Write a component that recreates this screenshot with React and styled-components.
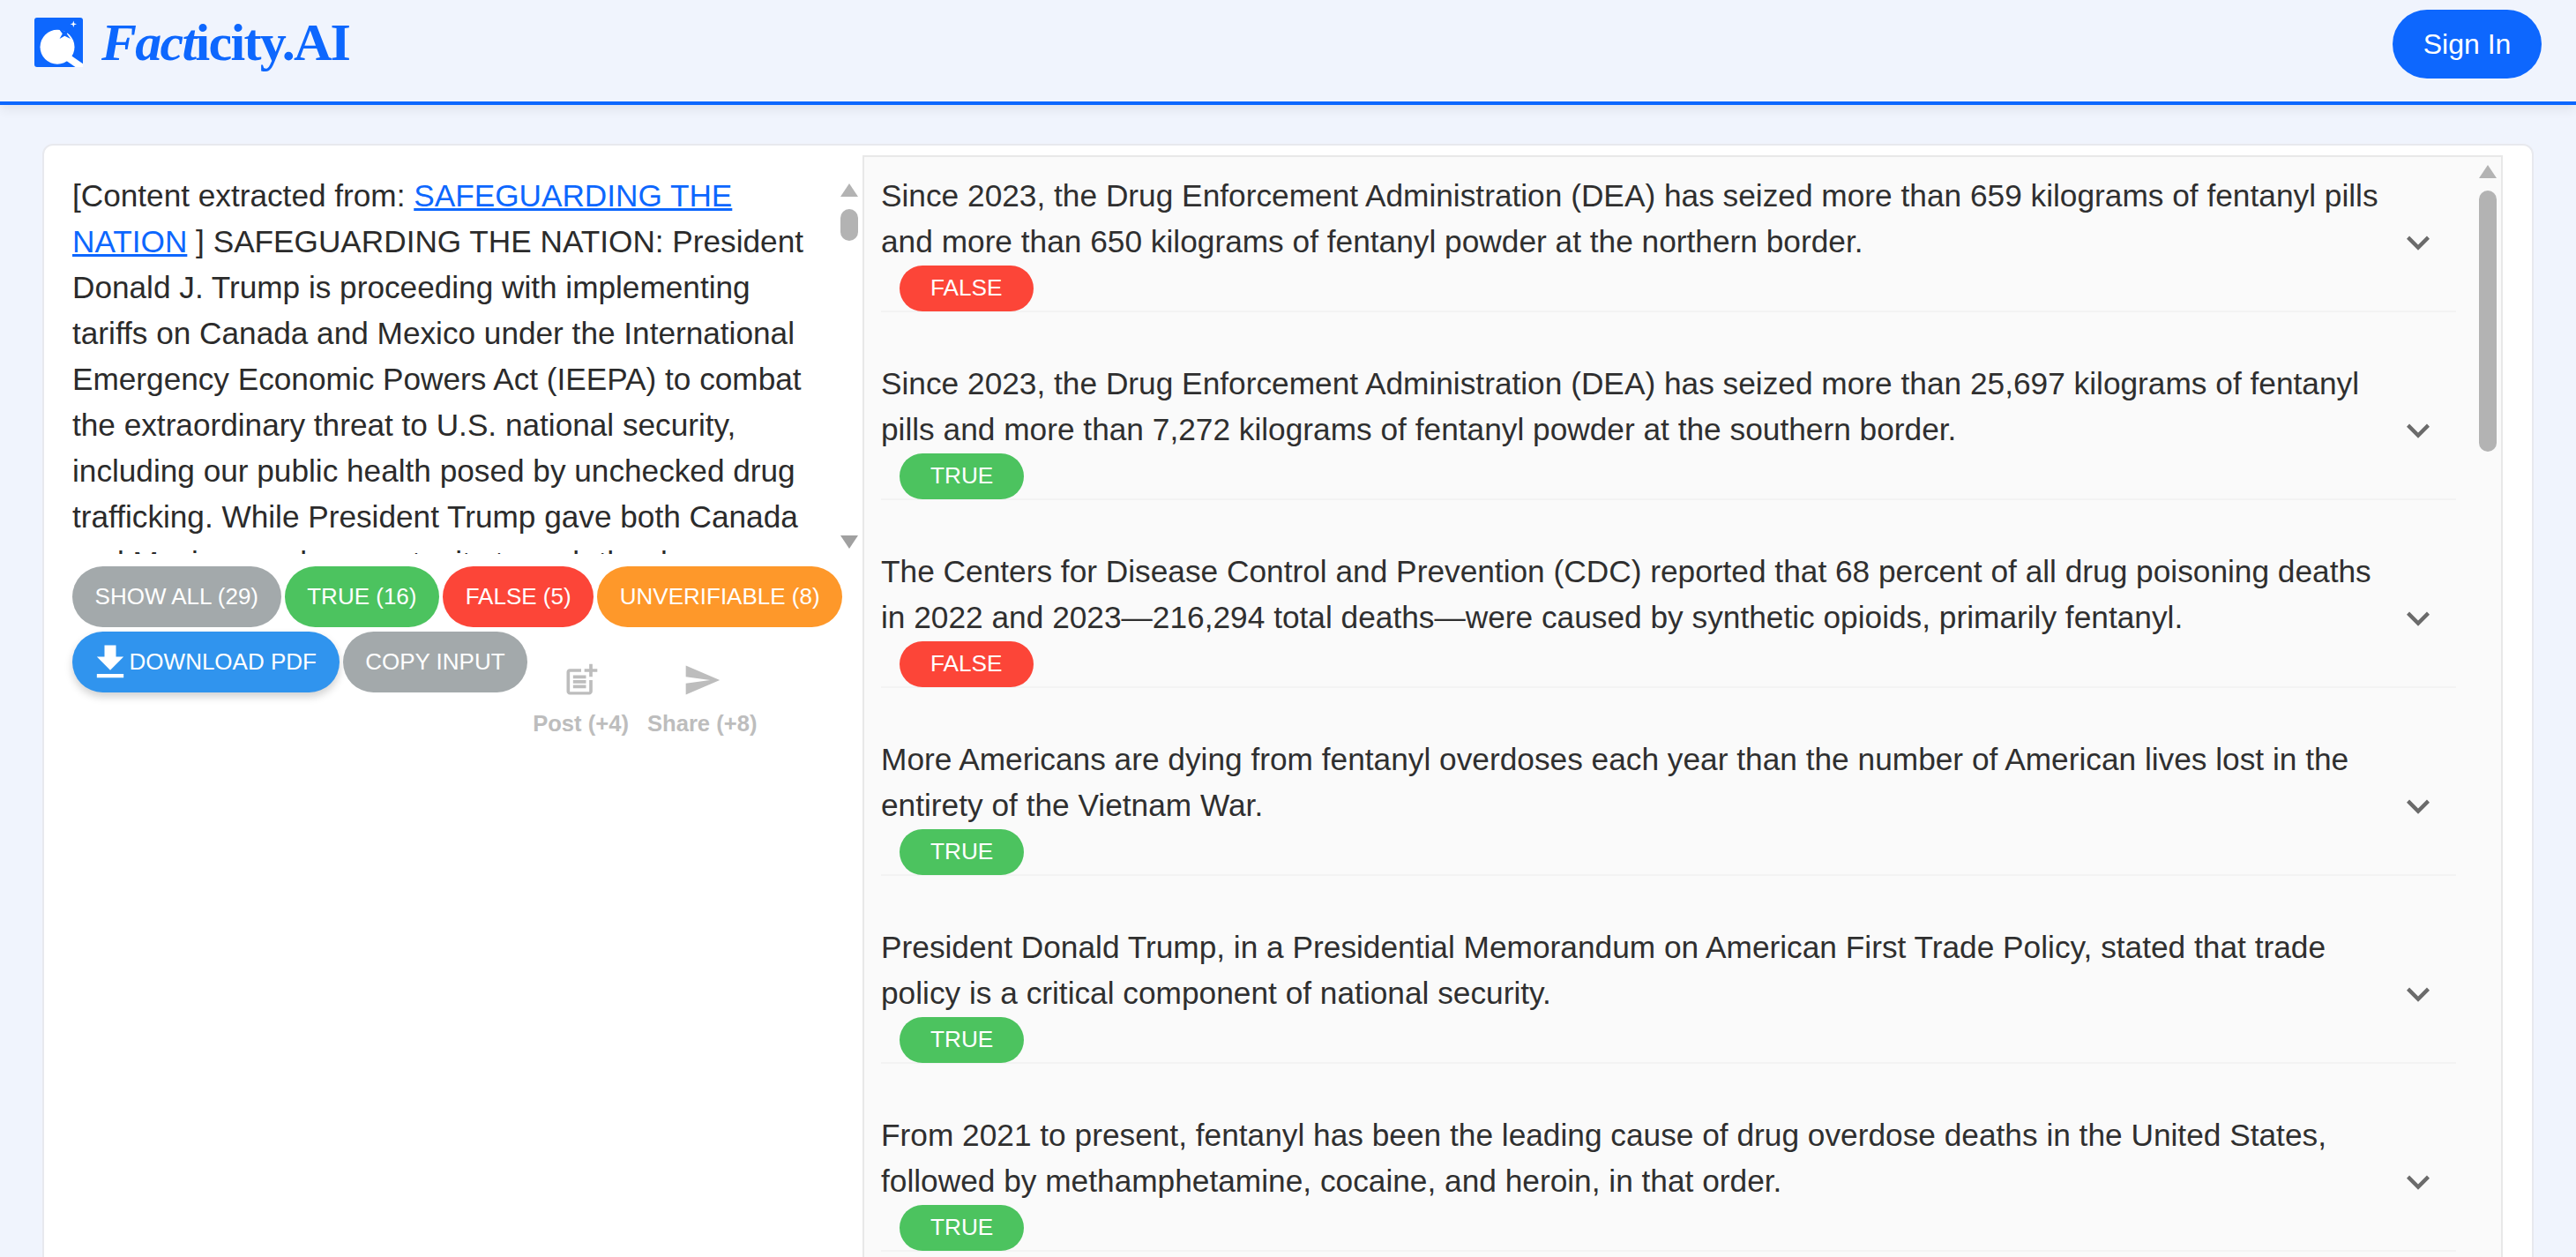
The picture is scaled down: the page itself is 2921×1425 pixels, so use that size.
import React from "react";
import styled, { createGlobalStyle } from "styled-components";

const Global = createGlobalStyle`
  html, body { margin: 0; padding: 0; height: 100%; overflow: hidden; background: #f0f4fd; }
  * { box-sizing: border-box; }
  body { font-family: "Liberation Sans", Arial, sans-serif; }
`;

const Page = styled.div`
  height: 100vh;
  overflow: hidden;
  display: flex;
  flex-direction: column;
`;
const Header = styled.header`
  flex: none;
  height: 119px;
  border-bottom: 4px solid #0d67fe;
  box-shadow: 0 5px 12px rgba(0, 0, 0, 0.07);
  padding: 11px 39px 0;
  display: flex;
  justify-content: space-between;
  align-items: flex-start;
  position: relative;
`;
const Brand = styled.div`
  display: flex;
  align-items: flex-start;
  gap: 21px;
  margin-top: 9px;
`;
const BrandName = styled.div`
  font-family: "Liberation Serif", serif;
  font-weight: 700;
  font-size: 60px;
  line-height: 56px;
  color: #0d67fe;
  white-space: nowrap;
  letter-spacing: -1.7px;
  em { font-style: italic; }
`;
const SignIn = styled.button`
  width: 169px;
  height: 78px;
  border: none;
  border-radius: 39px;
  background: #0d67fe;
  color: #fff;
  font: 400 32px "Liberation Sans", sans-serif;
`;
const Main = styled.main`
  flex: 1;
  min-height: 0;
  padding: 44px 48px 0 48px;
`;
const Card = styled.section`
  height: 1400px;
  background: #fff;
  border: 2px solid #e8e9ee;
  border-radius: 12px;
  display: flex;
  align-items: flex-start;
  padding-top: 11px;
`;
const Left = styled.div`
  flex: none;
  width: 928px;
  padding-left: 32px;
`;
const TextWrap = styled.div`
  position: relative;
  height: 452px;
  padding-top: 20px;
  overflow: hidden;
`;
const Body = styled.div`
  width: 850px;
  font-size: 35.2px;
  line-height: 52px;
  color: #2b2b2b;
  a { color: #0d67fe; text-decoration: underline; }
`;
const Track = styled.div`
  position: absolute;
  top: ${(p) => p.$top}px;
  right: ${(p) => p.$right}px;
  bottom: ${(p) => p.$bottom}px;
  width: 20px;
  display: flex;
  flex-direction: column;
  align-items: stretch;
`;
const Arrow = styled.div`
  flex: none;
  height: 15px;
  background: ${(p) => p.$color};
  clip-path: ${(p) =>
    p.$down ? "polygon(0 0, 100% 0, 50% 100%)" : "polygon(50% 0, 100% 100%, 0 100%)"};
  margin-top: ${(p) => (p.$down ? "auto" : "0")};
`;
const Thumb = styled.div`
  flex: none;
  height: ${(p) => p.$h}px;
  margin-top: ${(p) => p.$gap}px;
  background: #b3b3b3;
  border-radius: 10px;
`;
const Actions = styled.div`
  width: 884px;
  margin-top: 14px;
  display: flex;
  flex-wrap: wrap;
  align-items: flex-start;
  gap: 5px 4px;
`;
const Pill = styled.button`
  height: 69px;
  border: none;
  border-radius: 35px;
  padding: 0 25.6px;
  background: ${(p) => p.$bg};
  color: #fff;
  font: 400 26px "Liberation Sans", sans-serif;
  white-space: nowrap;
  display: inline-flex;
  align-items: center;
  box-shadow: ${(p) => (p.$raised ? "0 5px 10px rgba(0,0,0,0.18)" : "none")};
  svg { margin: 0 -4px 0 -9px; flex: none; }
`;
const Share = styled.div`
  margin: 33px 0 0 ${(p) => p.$ml}px;
  display: flex;
  flex-direction: column;
  align-items: center;
  color: #bdbdbd;
  font-weight: 700;
  font-size: 25.6px;
  line-height: 30px;
  svg { display: block; margin-bottom: 12px; }
`;
const Right = styled.div`
  position: relative;
  flex: none;
  width: 1860px;
  height: 1380px;
  background: #fafafa;
  border: 2px solid #e8e8e8;
  padding: 0 51px 0 19px;
`;
const Item = styled.article`
  display: flex;
  align-items: center;
  padding-top: 19px;
  margin-bottom: 37px;
  border-bottom: 2px solid #f3f3f3;
  height: 176px;
`;
const ItemBody = styled.div`
  width: 1717px;
  flex: none;
`;
const Claim = styled.div`
  font-size: 35.28px;
  line-height: 52px;
  color: #2f2f2f;
  margin: -1px 0 1px;
`;
const Badge = styled.span`
  display: inline-flex;
  align-items: center;
  height: 52px;
  margin-left: 21px;
  padding: 0 35px;
  border-radius: 26px;
  background: ${(p) => p.$bg};
  color: #fff;
  font-size: 26.2px;
`;
const Chevron = styled.svg`
  flex: none;
  width: 52px;
  height: 52px;
  fill: #6b6b6b;
`;

const GREEN = "#4cc35f";
const RED = "#fc4538";
const GREY = "#a3a9ab";
const ORANGE = "#fe982a";
const BLUE = "#3094ee";

const claims = [
  ["Since 2023, the Drug Enforcement Administration (DEA) has seized more than 659 kilograms of fentanyl pills and more than 650 kilograms of fentanyl powder at the northern border.", "FALSE"],
  ["Since 2023, the Drug Enforcement Administration (DEA) has seized more than 25,697 kilograms of fentanyl pills and more than 7,272 kilograms of fentanyl powder at the southern border.", "TRUE"],
  ["The Centers for Disease Control and Prevention (CDC) reported that 68 percent of all drug poisoning deaths in 2022 and 2023—216,294 total deaths—were caused by synthetic opioids, primarily fentanyl.", "FALSE"],
  ["More Americans are dying from fentanyl overdoses each year than the number of American lives lost in the entirety of the Vietnam War.", "TRUE"],
  ["President Donald Trump, in a Presidential Memorandum on American First Trade Policy, stated that trade policy is a critical component of national security.", "TRUE"],
  ["From 2021 to present, fentanyl has been the leading cause of drug overdose deaths in the United States, followed by methamphetamine, cocaine, and heroin, in that order.", "TRUE"],
];

function Logo() {
  return (
    <svg width="55" height="56" viewBox="0 0 55 56">
      <rect width="55" height="56" rx="3" fill="#0d67fe" />
      <line x1="39" y1="46" x2="52" y2="55" stroke="#fff" strokeWidth="8" strokeLinecap="round" />
      <circle cx="26" cy="33.3" r="19.5" fill="#fff" />
      <path d="M27 11.7 L34.3 15.8 L40.5 12.5 L36.8 18.3 L41 24 L34.3 20.8 L28.5 24 L31.8 18.3 Z" fill="#0d67fe" />
      <path d="M44.3 3.5 L45.2 6.4 L48 7.3 L45.2 8.2 L44.3 11 L43.4 8.2 L40.5 7.3 L43.4 6.4 Z" fill="#fff" />
    </svg>
  );
}

export default function App() {
  return (
    <Page>
      <Global />
      <Header>
        <Brand>
          <Logo />
          <BrandName>
            <em>Fact</em>icity.AI
          </BrandName>
        </Brand>
        <SignIn>Sign In</SignIn>
      </Header>
      <Main>
        <Card>
          <Left>
            <TextWrap>
              <Body>
                [Content extracted from: <a href="#s">SAFEGUARDING THE NATION</a> ] SAFEGUARDING THE NATION: President Donald J. Trump is proceeding with implementing tariffs on Canada and Mexico under the International Emergency Economic Powers Act (IEEPA) to combat the extraordinary threat to U.S. national security, including our public health posed by unchecked drug trafficking. While President Trump gave both Canada and Mexico ample opportunity to curb the dangerous flow of drugs into the United States.
              </Body>
              <Track $top={32} $right={5} $bottom={6}>
                <Arrow $color="#b3b3b3" />
                <Thumb $h={36} $gap={14} />
                <Arrow $down $color="#a0a0a0" />
              </Track>
            </TextWrap>
            <Actions>
              <Pill $bg={GREY}>SHOW ALL (29)</Pill>
              <Pill $bg={GREEN}>TRUE (16)</Pill>
              <Pill $bg={RED}>FALSE (5)</Pill>
              <Pill $bg={ORANGE}>UNVERIFIABLE (8)</Pill>
              <Pill $bg={BLUE} $raised>
                <svg width="52" height="52" viewBox="0 0 24 24" fill="#fff">
                  <path d="M5 20h14v-2H5v2zM19 9h-4V3H9v6H5l7 7 7-7z" />
                </svg>
                DOWNLOAD PDF
              </Pill>
              <Pill $bg={GREY}>COPY INPUT</Pill>
              <Share $ml={2}>
                <svg width="44" height="44" viewBox="0 0 24 24" fill="#bdbdbd">
                  <path d="M17 19.22H5V7h7V5H5c-1.1 0-2 .9-2 2v12c0 1.1.9 2 2 2h12c1.1 0 2-.9 2-2v-7h-2v7.22z" />
                  <path d="M19 2h-2v3h-3c.01.01 0 2 0 2h3v2.99c.01.01 2 0 2 0V7h3V5h-3V2z" />
                  <path d="M7 9h8v2H7zM7 12v2h8v-2h-3zM7 15h8v2H7z" />
                </svg>
                Post (+4)
              </Share>
              <Share $ml={17}>
                <svg width="44" height="44" viewBox="0 0 24 24" fill="#bdbdbd">
                  <path d="M2.01 21 23 12 2.01 3 2 10l15 2-15 2z" />
                </svg>
                Share (+8)
              </Share>
            </Actions>
          </Left>
          <Right>
            {claims.map(([text, verdict]) => (
              <Item key={text}>
                <ItemBody>
                  <Claim>{text}</Claim>
                  <Badge $bg={verdict === "TRUE" ? GREEN : RED}>{verdict}</Badge>
                </ItemBody>
                <Chevron viewBox="0 0 24 24">
                  <path d="M16.59 8.59 12 13.17 7.41 8.59 6 10l6 6 6-6z" />
                </Chevron>
              </Item>
            ))}
            <Track $top={9} $right={5} $bottom={4}>
              <Arrow $color="#b3b3b3" />
              <Thumb $h={296} $gap={14} />
            </Track>
          </Right>
        </Card>
      </Main>
    </Page>
  );
}
